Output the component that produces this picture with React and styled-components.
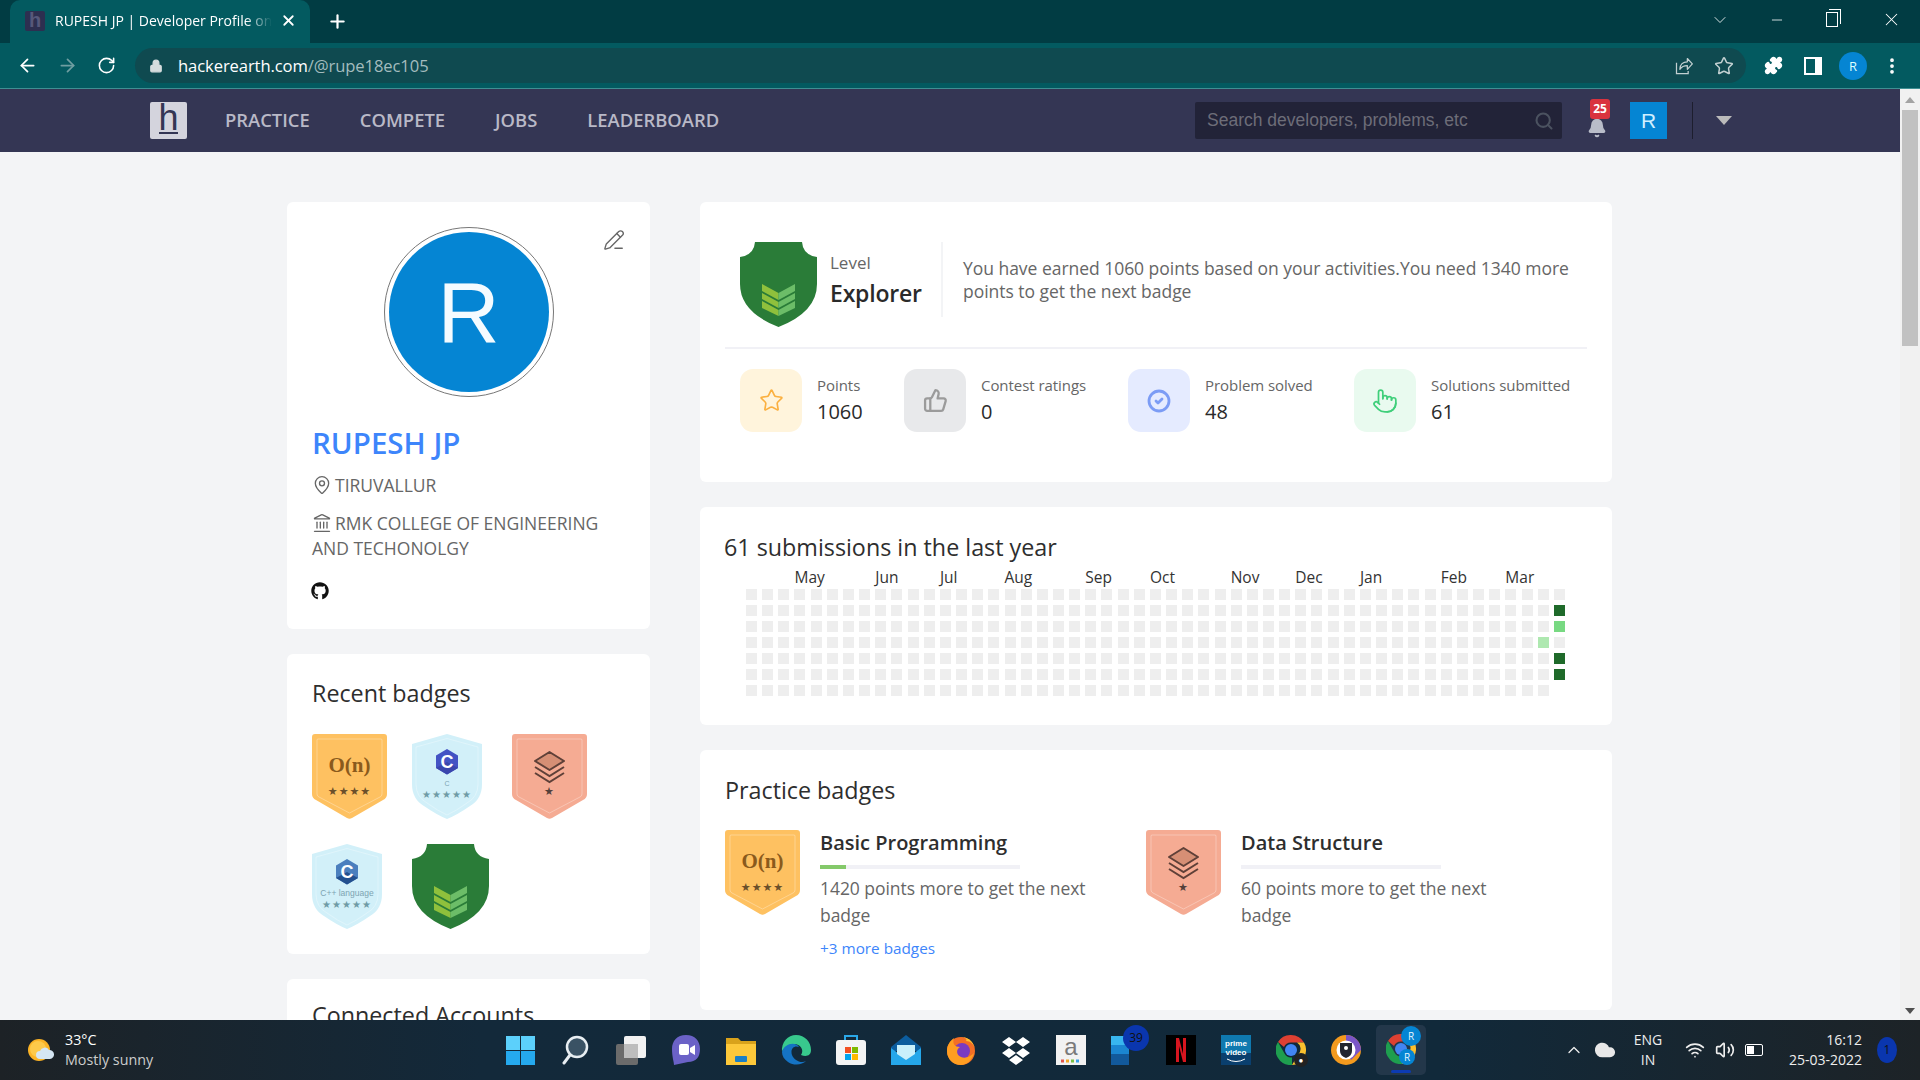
import React from "react";
import styled, { createGlobalStyle } from "styled-components";
import {
  ArrowLeft, ArrowRight, RotateCw, Lock, Star, Puzzle, X, Plus, ChevronDown, ChevronUp, Minus, Search, Bell,
  MapPin, Landmark, ThumbsUp, CircleCheck, Pointer, Wifi, Volume2, PencilLine, Cloud, EllipsisVertical,
} from "lucide-react";
import { FaGithub } from "react-icons/fa";

const Global = createGlobalStyle`
  html, body { margin: 0; padding: 0; height: 100%; overflow: hidden; }
  body { font-family: "Open Sans", "Noto Sans", sans-serif; background: #f3f4f6; }
  * { box-sizing: border-box; }
`;

const Screen = styled.div`width: 1920px; height: 1080px; display: flex; flex-direction: column; overflow: hidden;`;

/* ---- browser chrome ---- */
const TabStrip = styled.div`height: 43px; flex: none; background: #013c43; display: flex; align-items: flex-end; padding-left: 10px; color: #fff;`;
const Tab = styled.div`
  width: 300px; height: 43px; background: #035a60; border-radius: 10px 10px 0 0; display: flex; align-items: center;
  padding: 0 13px 2px 15px; font-family: "Open Sans", sans-serif; font-size: 14px;
`;
const Favicon = styled.div`
  width: 20px; height: 20px; background: #2d2f50; border-radius: 2px; flex: none; color: #56587a; font: 700 20px/19px "Liberation Sans", sans-serif; text-align: center; margin-right: 10px;
`;
const TabTitle = styled.div`
  flex: 1; white-space: nowrap; overflow: hidden; margin-right: 8px;
  -webkit-mask-image: linear-gradient(90deg, #000 88%, transparent 100%); mask-image: linear-gradient(90deg, #000 88%, transparent 100%);
`;
const NewTab = styled.div`margin-left: 17px; height: 43px; display: flex; align-items: center;`;
const WindowControls = styled.div`
  margin-left: auto; display: flex; height: 43px; align-items: center; gap: 39px; padding-right: 18px; padding-bottom: 4px;
`;
const Restore = styled.div`
  width: 12px; height: 15px; border: 1.4px solid #fff; position: relative; margin: 0 4px 0 2px;
  &::after { content: ""; position: absolute; left: 2px; top: -4px; width: 11px; height: 14px; border: 1.2px solid #fff; border-left: none; border-bottom: none; }
`;
const Toolbar = styled.div`
  height: 46px; flex: none; background: #035a60; border-bottom: 1px solid #3f8f93; display: flex; align-items: center; padding: 0 0 0 17px; gap: 20px; color: #fff;
`;
const ToolButtons = styled.div`display: flex; align-items: center; gap: 19px;`;
const AddressBar = styled.div`
  width: 1611px; height: 35px; background: #0f4a50; border-radius: 18px; display: flex; align-items: center; padding: 0 12px 0 14px; margin-left: -1px; gap: 15px;
`;
const Url = styled.div`flex: 1; font-size: 16.6px; color: #fff; letter-spacing: -0.1px; span { color: #a3bcbe; }`;
const AddressIcons = styled.div`display: flex; align-items: center; gap: 20px; color: #c2d0d1;`;
const ToolRight = styled.div`display: flex; align-items: center; gap: 17px; margin-left: -2px;`;
const PanelIcon = styled.div`width: 18px; height: 18px; background: #fff; padding: 2px 7px 2px 2px; margin-left: 4px; & > div { width: 100%; height: 100%; background: #035a60; }`;
const ProfileDot = styled.div`width: 28px; height: 28px; border-radius: 50%; background: #0585d3; color: #dff; font-size: 13px; text-align: center; line-height: 28px; margin-right: -2px;`;

/* ---- page frame ---- */
const Frame = styled.div`flex: 1; min-height: 0; display: flex;`;
const FrameContent = styled.div`flex: 1; min-width: 0; display: flex; flex-direction: column;`;
const Scrollbar = styled.div`width: 20px; flex: none; background: #f1f1f1; display: flex; flex-direction: column; align-items: center; padding-top: 8px;`;
const ScrollUp = styled.div`width: 0; height: 0; border-left: 5px solid transparent; border-right: 5px solid transparent; border-bottom: 6px solid #a3a3a3;`;
const ScrollThumb = styled.div`width: 16px; height: 236px; background: #c1c1c1; margin-top: 7px;`;
const ScrollDown = styled.div`width: 0; height: 0; border-left: 5px solid transparent; border-right: 5px solid transparent; border-top: 6px solid #505050; margin-top: auto; margin-bottom: 6px;`;

/* ---- site nav ---- */
const Nav = styled.nav`height: 63px; flex: none; background: #343654; display: flex; align-items: center; padding-left: 150px;`;
const Logo = styled.div`
  width: 37px; height: 37px; border-radius: 2px; background: #d4d4dd; color: #343654; text-align: center; font: 400 36px/31px "Liberation Sans", sans-serif; position: relative;
  &::after { content: ""; position: absolute; left: 9px; right: 9px; bottom: 5px; height: 2px; background: #343654; }
`;
const NavLinks = styled.div`display: flex; gap: 50px; margin-left: 38px; padding-bottom: 2px;`;
const NavLink = styled.a`color: #b9b9c7; font-size: 18.4px; font-weight: 600;`;
const NavSearch = styled.div`
  margin-left: auto; width: 367px; height: 37px; background: #222338; border-radius: 2px; display: flex; align-items: center; justify-content: space-between; padding: 0 8px 0 12px;
  color: #6d6d78; font: 400 17.5px "Liberation Sans", sans-serif;
`;
const BellWrap = styled.div`position: relative; width: 20px; height: 37px; margin-left: 25px; padding-bottom: 1px; color: #b9bdc9; display: flex; align-items: flex-end; justify-content: center;`;
const BellBadge = styled.div`
  position: absolute; left: 3px; top: -3px; width: 20px; height: 20px; background: #d9333f; border-radius: 3px; color: #fff; font-size: 12px; font-weight: 700; text-align: center; line-height: 19px;
`;
const UserBox = styled.div`
  width: 37px; height: 37px; background: #0585d3; color: #cfefff; font: 400 21px/37px "Liberation Sans", sans-serif; text-align: center; margin-left: 23px;
`;
const NavSep = styled.div`width: 1px; height: 37px; background: #1d1e2e; margin-left: 25px;`;
const Caret = styled.div`width: 0; height: 0; border-left: 8px solid transparent; border-right: 8px solid transparent; border-top: 9px solid #bbb; margin: 0 168px 0 23px;`;

/* ---- page ---- */
const Main = styled.main`flex: 1; min-height: 0; display: flex; gap: 50px; padding: 50px 0 0 287px; overflow: hidden;`;
const Column = styled.div`width: ${(p) => p.$w}px; flex: none; display: flex; flex-direction: column; gap: 25px;`;
const Card = styled.section`background: #fff; border-radius: 6px; height: ${(p) => p.$h}px; flex: none; position: relative; padding: ${(p) => p.$pad || "0"};`;

const EditBtn = styled.div`position: absolute; right: 25px; top: 27px; color: #666;`;
const Avatar = styled.div`
  width: 170px; height: 170px; border-radius: 50%; border: 1px solid #777; padding: 4px; margin: 0 auto;
  & > div { width: 100%; height: 100%; border-radius: 50%; background: #0585d3; color: #f4fbff; font: 400 86px/160px "Liberation Sans", sans-serif; text-align: center; }
`;
const Name = styled.h1`margin: 26px 0 0; font-size: 29.500px; line-height: 40px; font-weight: 600; color: #3d85fb;`;
const InfoLine = styled.div`font-size: 17.5px; line-height: 25px; color: #666; margin-top: ${(p) => p.$mt}px; svg { vertical-align: -3px; margin-right: 3px; }`;
const GitLink = styled.div`margin-top: 21px; height: 18px; color: #111; margin-left: -1px;`;
const CardTitle = styled.h2`font-size: 23.3px; line-height: 32px; font-weight: 500; color: #2e2e2e; margin: 0;`;
const BadgeGrid = styled.div`display: flex; flex-wrap: wrap; width: 300px; row-gap: 25px; margin-top: 25px;`;
const BadgeSlot = styled.div`width: 100px; height: 85px;`;

const LevelRow = styled.div`display: flex; align-items: flex-start; margin-left: 40px; height: 85px;`;
const LevelText = styled.div`margin-left: 13px; width: 111px; padding-top: 8px;`;
const LevelLabel = styled.div`font-size: 17px; line-height: 26px; color: #666;`;
const LevelName = styled.div`font-size: 23px; line-height: 35px; font-weight: 600; color: #2a2a2a; letter-spacing: -0.2px;`;
const LevelDesc = styled.p`margin: 0; width: 630px; border-left: 2px solid #f3f4f6; height: 75px; padding: 15px 0 0 20px; font-size: 17.5px; line-height: 23px; color: #666; letter-spacing: -0.03px;`;
const Divider = styled.div`height: 2px; background: #f1f1f6; margin: 20px 25px 0;`;
const StatRow = styled.div`display: flex; margin: 20px 0 0 40px;`;
const Stat = styled.div`display: flex; width: ${(p) => p.$w}px; flex: none;`;
const StatTile = styled.div`width: 62px; height: 63px; flex: none; border-radius: 13px; background: ${(p) => p.$bg}; color: ${(p) => p.$fg}; display: flex; align-items: center; justify-content: center;`;
const StatText = styled.div`margin-left: 15px; white-space: nowrap; padding-top: 5px;`;
const StatLabel = styled.div`font-size: 15px; line-height: 22px; color: #666; letter-spacing: -0.05px;`;
const StatValue = styled.div`font-size: 20px; line-height: 32px; font-weight: 500; color: #2a2a2a;`;

const Heat = styled.div`display: grid; grid-template-columns: repeat(51, 11px); column-gap: 5.16px; margin-left: 22px;`;
const Months = styled(Heat)`margin-top: 3px; height: 22.5px; align-items: center;`;
const Month = styled.span`grid-column: ${(p) => p.$col}; grid-row: 1; white-space: nowrap; font-size: 15.5px; color: #333; width: 11px;`;
const Cells = styled(Heat)`grid-template-rows: repeat(7, 11px); grid-auto-flow: column; row-gap: 5px;`;
const Cell = styled.div`width: 11px; height: 11px; background: ${(p) => p.$c};`;

const PracticeRow = styled.div`display: flex; margin-top: 24px;`;
const PracticeItem = styled.div`display: flex; width: 421px; flex: none;`;
const PracticeText = styled.div`margin-left: 20px; width: 285px;`;
const PracticeName = styled.div`font-size: 20px; line-height: 26px; font-weight: 600; color: #2e2e2e;`;
const Bar = styled.div`width: 200px; height: 4px; background: #f1f1f6; margin-top: 9px;`;
const BarFill = styled.div`height: 100%; background: #84c96a;`;
const PracticeDesc = styled.p`margin: 6px 0 0; font-size: 17.5px; line-height: 27px; color: #666; letter-spacing: -0.05px;`;
const MoreLink = styled.a`display: block; margin-top: 8px; font-size: 15.3px; line-height: 22px; color: #3d85fb;`;

/* ---- taskbar ---- */
const Taskbar = styled.footer`
  height: 60px; flex: none; display: flex; align-items: center; color: #fff; position: relative; z-index: 1;
  background: linear-gradient(90deg, #1d2226 0%, #13293a 25%, #11293a 75%, #1d2327 100%);
`;
const Weather = styled.div`width: 506px; flex: none; display: flex; align-items: center; padding-left: 27px;`;
const WeatherText = styled.div`margin-left: 11px; font-size: 14.3px; line-height: 20px; span { display: block; color: #ccc; }`;
const TaskIcons = styled.div`display: flex; align-items: center; gap: 25px; width: 921px; flex: none;`;
const TaskIcon = styled.div`width: 30px; height: 30px; flex: none; position: relative;`;
const ActiveTask = styled.div`
  width: 50px; height: 50px; border-radius: 5px; background: #23374a; margin: 0 -10px; position: relative; padding: 9px 10px; flex: none;
  &::after { content: ""; position: absolute; left: 15px; bottom: 2px; width: 20px; height: 3px; border-radius: 2px; background: #0c3bb3; }
`;
const CountDot = styled.div`position: absolute; right: -8px; top: -10px; width: 26px; height: 26px; border-radius: 50%; background: #0a36ae; color: #111; font-size: 12px; text-align: center; line-height: 26px;`;
const Tray = styled.div`display: flex; align-items: center; flex: 1; padding-left: 137px; color: #eee;`;
const CloudWrap = styled.div`margin-left: 10px; height: 22px;`;
const Lang = styled.div`width: 44px; margin-left: 10px; font-size: 14px; line-height: 20px; text-align: center; flex: none;`;
const TrayIcons = styled.div`display: flex; align-items: center; gap: 10px; margin-left: 15px;`;
const Battery = styled.div`width: 18px; height: 12px; border: 1.6px solid #fff; border-radius: 2px; padding: 1px; margin-left: 10px; & > div { width: 7px; height: 100%; background: #fff; }`;
const Clock = styled.div`width: 94px; margin-left: 5px; text-align: right; font-size: 14px; line-height: 20px; flex: none;`;
const Notice = styled.div`width: 20px; height: 26px; border-radius: 50%; background: #0a36ae; color: #111; font-size: 12px; line-height: 26px; text-align: center; margin-left: 15px; flex: none;`;

/* ---- drawings ---- */
const ShareIcon = () => (
  <svg width="20" height="20" viewBox="0 0 24 24" fill="none" stroke="currentColor" strokeWidth="1.500">
    <path d="M3 8v13h14v-3" />
    <path d="M7 16c0-6 4-9 9-9V3l6 6.500-6 6.500v-4.500c-4 0-7 1.500-9 4.500Z" strokeLinejoin="round" />
  </svg>
);
const Inner = ({ d }) => <path d={d} fill="none" stroke="#fff" strokeOpacity=".3" />;
const StarsText = ({ x, y, text, fill, size = 11 }) => (
  <text x={x} y={y} textAnchor="middle" fontSize={size} fill={fill} letterSpacing="1" fontFamily="DejaVu Sans, sans-serif">{text}</text>
);
const pennant = "M3 0H72Q75 0 75 3V60Q75 64 71 66L40 84Q37.5 85.5 35 84L4 66Q0 64 0 60V3Q0 0 3 0Z";
const pennantIn = "M6 5H69Q70 5 70 6V60Q70 62 68 63L37.5 79L7 63Q5 62 5 60V6Q5 5 6 5Z";
const OrangeBadge = () => (
  <svg width="75" height="85" viewBox="0 0 75 85">
    <path d={pennant} fill="#fec161" /><Inner d={pennantIn} />
    <text x="37.5" y="38" textAnchor="middle" fontFamily="Liberation Serif, serif" fontWeight="700" fontSize="21" fill="#8a5a1c">O(n)</text>
    <StarsText x="37.5" y="61" text="★★★★" fill="#6b4f2a" />
  </svg>
);
const SalmonBadge = () => (
  <svg width="75" height="85" viewBox="0 0 75 85">
    <path d={pennant} fill="#f5ab93" /><Inner d={pennantIn} />
    <path d="M37.5 18L52 27L37.5 36L23 27Z" fill="#d68f75" stroke="#5f4038" strokeWidth="2" strokeLinejoin="round" />
    <path d="M23 33L37.5 42L52 33M23 39L37.5 48L52 39" fill="none" stroke="#5f4038" strokeWidth="2" />
    <StarsText x="37.5" y="61" text="★" fill="#54403a" />
  </svg>
);
const Hex = ({ fill, dark, label }) => (
  <g>
    <path d="M35 15L46 21.500V34L35 40.500L24 34V21.500Z" fill={fill} />
    <path d="M24 34L35 40.500L46 34L35 28Z" fill={dark} />
    <text x="35" y="34" textAnchor="middle" fontFamily="Liberation Sans, sans-serif" fontWeight="700" fontSize="18" fill="#fff">{label}</text>
  </g>
);
const blue = "M0 10L35 0L70 10V50Q70 65 58 72Q45 81 35 85Q25 81 12 72Q0 65 0 50Z";
const blueIn = "M4 13L35 4.500L66 13V50Q66 63 55 69Q44 77 35 81Q26 77 15 69Q4 63 4 50Z";
const CBadge = () => (
  <svg width="70" height="85" viewBox="0 0 70 85">
    <path d={blue} fill="#d2f0f9" /><Inner d={blueIn} />
    <Hex fill="#4353c4" dark="#3a46ad" label="C" />
    <text x="35" y="52" textAnchor="middle" fontFamily="Liberation Sans, sans-serif" fontSize="7" fill="#7da4b2">C</text>
    <StarsText x="35" y="64" text="★★★★★" fill="#6f9ba6" size={10} />
  </svg>
);
const CppBadge = () => (
  <svg width="70" height="85" viewBox="0 0 70 85">
    <path d={blue} fill="#d2f0f9" /><Inner d={blueIn} />
    <Hex fill="#4b7fbe" dark="#23508f" label="C" />
    <text x="35" y="52" textAnchor="middle" fontFamily="Liberation Sans, sans-serif" fontSize="8.500" fill="#7da4b2">C++ language</text>
    <StarsText x="35" y="64" text="★★★★★" fill="#6f9ba6" size={10} />
  </svg>
);
const GreenShield = () => (
  <svg width="77" height="85" viewBox="0 0 77 85">
    <path d="M15 0H62Q63 13 77 15V42Q77 70 38.500 85Q0 70 0 42V15Q14 13 15 0Z" fill="#2a7c38" />
    <path d="M22 42L38.500 51V58L22 49ZM22 51L38.500 60V66L22 57ZM22 59L38.500 68V74L22 66Z" fill="#8fc03c" />
    <path d="M55 42L38.500 51V58L55 49ZM55 51L38.500 60V66L55 57ZM55 59L38.500 68V74L55 66Z" fill="#6cbd68" />
  </svg>
);
const Svg30 = ({ children }) => <svg width="30" height="30" viewBox="0 0 30 30">{children}</svg>;
const WeatherIcon = () => (
  <svg width="27" height="26" viewBox="0 0 27 26">
    <circle cx="12" cy="13" r="11" fill="#fbb325" /><circle cx="11" cy="12" r="8" fill="#fdc94a" />
    <path d="M13 22a4 4 0 0 1 0-8 5 5 0 0 1 9-1 4.500 4.500 0 0 1 1 9Z" fill="#d5e6f3" />
  </svg>
);
const icons = {
  win: <Svg30><path d="M0 1h14v14H0zM15 1h14v14H15z" fill="#5cd0fb" /><path d="M0 16h14v14H0zM15 16h14v14H15z" fill="#25a9ee" /></Svg30>,
  search: <Svg30><circle cx="16" cy="12" r="10" fill="#3a5264" stroke="#e8eef2" strokeWidth="2.500" /><path d="M9 20L3 28" stroke="#e8eef2" strokeWidth="3" strokeLinecap="round" /></Svg30>,
  view: <Svg30><rect x="8" y="1" width="22" height="22" rx="2" fill="#f2f2f2" /><rect x="0" y="9" width="22" height="21" rx="2" fill="#6b6b6b" /><rect x="8" y="9" width="14" height="14" fill="#bdbdbd" /></Svg30>,
  chat: <Svg30><path d="M15 0C24 0 29 6 29 14S25 27 17 27L3 30C3 27 1 22 1 14S6 0 15 0Z" fill="#6b62c7" /><rect x="8" y="9" width="10" height="11" rx="2" fill="#fff" /><path d="M19 13l5-3v10l-5-3Z" fill="#fff" /></Svg30>,
  folder: <Svg30><path d="M0 3h12l3 3h15v24H0Z" fill="#d9a21b" /><path d="M0 9h30v21H0Z" fill="#fdc83a" /><rect x="9" y="21" width="12" height="6" rx="1" fill="#1a7fc6" /></Svg30>,
  edge: <Svg30><path d="M15 0C24 0 30 7 30 15C30 21 25 22 20 20C24 14 18 8 12 9C6 10 2 14 1 17C0 7 7 0 15 0Z" fill="#38c98d" /><path d="M1 17C3 9 14 6 18 12C13 10 9 14 11 20C13 25 20 29 25 26C21 30 13 31 7 27C3 24 1 21 1 17Z" fill="#1573c4" /></Svg30>,
  store: <Svg30><path d="M9 5V1h12v4" fill="none" stroke="#2aa8e8" strokeWidth="2" /><rect x="0" y="5" width="30" height="25" rx="3" fill="#f4f4f4" /><path d="M9 12h6v6H9z" fill="#f25022" /><path d="M16 12h6v6h-6z" fill="#7fba00" /><path d="M9 19h6v6H9z" fill="#00a4ef" /><path d="M16 19h6v6h-6z" fill="#ffb900" /></Svg30>,
  mail: <Svg30><path d="M15 0L30 12V16H0V12Z" fill="#0c5d9e" /><path d="M0 13L15 24L30 13V30H0Z" fill="#25a7ea" /><path d="M6 10h18v9l-9 6-9-6Z" fill="#c9f0fb" /></Svg30>,
  firefox: <Svg30><circle cx="15" cy="16" r="14" fill="#f36e25" /><path d="M15 2C24 2 29 9 29 16C29 9 24 6 20 6C22 4 18 2 15 2Z" fill="#fec32f" /><circle cx="16" cy="16" r="8" fill="#7a3bc2" /><path d="M1 16C1 10 4 6 8 3C6 9 9 12 14 12C10 14 10 20 15 22C20 24 25 21 28 18C26 25 21 30 15 30C7 30 1 24 1 16Z" fill="#ff9e21" /></Svg30>,
  dropbox: <Svg30><path d="M8 2L15 7L8 12L1 7ZM22 2L29 7L22 12L15 7ZM8 13L15 18L8 23L1 18ZM22 13L29 18L22 23L15 18ZM15 20L22 25L15 30L8 25Z" fill="#fff" /></Svg30>,
  amazon: <Svg30><rect width="30" height="30" fill="#f2f2f2" /><text x="15" y="20" textAnchor="middle" fontFamily="Liberation Sans, sans-serif" fontSize="24" fill="#7a7a7a">a</text><path d="M5 26h3" stroke="#e2574c" strokeWidth="3" /><path d="M10 26h3" stroke="#f5a623" strokeWidth="3" /><path d="M15 26h3" stroke="#7ac143" strokeWidth="3" /><path d="M20 26h3" stroke="#3aa0e8" strokeWidth="3" /></Svg30>,
  todo: <Svg30><path d="M0 1h18v9H0z" fill="#38b6ef" /><path d="M0 10h18v9H0z" fill="#1b86d1" /><path d="M0 19h18v11H0z" fill="#12599b" /></Svg30>,
  netflix: <Svg30><rect width="30" height="30" fill="#000" /><path d="M10 3h3l4 16V3h3v24h-3L13 11v16h-3Z" fill="#d8151f" /></Svg30>,
  prime: <Svg30><rect width="30" height="30" fill="#0f79af" /><rect y="18" width="30" height="12" fill="#0a3f6e" /><text x="15" y="11" textAnchor="middle" fontFamily="Liberation Sans, sans-serif" fontSize="8" fontWeight="700" fill="#fff">prime</text><text x="15" y="20" textAnchor="middle" fontFamily="Liberation Sans, sans-serif" fontSize="8" fontWeight="700" fill="#fff">video</text><path d="M6 24Q15 29 24 24" fill="none" stroke="#fff" /></Svg30>,
  brave: <Svg30><circle cx="15" cy="15" r="15" fill="#f39a1e" /><path d="M15 0A15 15 0 0 1 30 15L20 25L15 15Z" fill="#7a55c7" /><circle cx="15" cy="15" r="9.500" fill="#fff" /><path d="M9 8h12v8q0 5-6 7-6-2-6-7Z" fill="#22252f" /><circle cx="15" cy="13" r="2" fill="#fff" /></Svg30>,
};
const Chrome = () => (
  <Svg30>
    <path d="M15 0a15 15 0 0 1 13 7.500H15a7.500 7.500 0 0 0-7 4.500L2 7A15 15 0 0 1 15 0Z" fill="#de4032" />
    <path d="M28 7.500A15 15 0 0 1 16 30l6.500-11A7.500 7.500 0 0 0 21 7.500Z" fill="#fbc02d" />
    <path d="M2 7l6.500 11.500A7.500 7.500 0 0 0 16 22.500L16 30A15 15 0 0 1 2 7Z" fill="#1e9e4f" />
    <circle cx="15" cy="15" r="6" fill="#4285f4" />
  </Svg30>
);
const MiniR = styled.div`
  position: absolute; border-radius: 50%; background: #0585d3; color: #e6f6ff; text-align: center; font-family: "Open Sans", sans-serif;
  width: ${(p) => p.$s}px; height: ${(p) => p.$s}px; line-height: ${(p) => p.$s}px; font-size: 10px; left: ${(p) => p.$l}px; top: ${(p) => p.$t}px;
`;
const AvatarBadge = styled.div`position: absolute; right: -2px; bottom: -2px; width: 14px; height: 14px; border-radius: 50%; background: #222; color: #fff; font-size: 8px; line-height: 14px; text-align: center;`;

const active = { 1: "#1f6a2a", 2: "#78d982", 4: "#1f6a2a", 5: "#1f6a2a" };
const months = [["May", 4], ["Jun", 9], ["Jul", 13], ["Aug", 17], ["Sep", 22], ["Oct", 26], ["Nov", 31], ["Dec", 35], ["Jan", 39], ["Feb", 44], ["Mar", 48]];
const cells = [];
for (let c = 0; c < 51; c++) {
  const n = c === 50 ? 6 : 7;
  for (let r = 0; r < n; r++) {
    let col = "#eeeeee";
    if (c === 50 && active[r]) col = active[r];
    if (c === 49 && r === 3) col = "#aee8b0";
    cells.push(<Cell key={`${c}-${r}`} $c={col} />);
  }
}

export default function App() {
  return (
    <Screen>
      <Global />
      <TabStrip>
        <Tab>
          <Favicon>h</Favicon>
          <TabTitle>RUPESH JP | Developer Profile on</TabTitle>
          <X size={17} strokeWidth={2.500} />
        </Tab>
        <NewTab><Plus size={21} strokeWidth={2.500} /></NewTab>
        <WindowControls>
          <ChevronDown size={20} strokeWidth={1} />
          <Minus size={16} strokeWidth={1.200} />
          <Restore />
          <X size={21} strokeWidth={1.200} />
        </WindowControls>
      </TabStrip>
      <Toolbar>
        <ToolButtons>
          <ArrowLeft size={21} />
          <ArrowRight size={21} color="#6f9ea1" />
          <RotateCw size={19} />
        </ToolButtons>
        <AddressBar>
          <Lock size={14} color="#d5dcdd" fill="#d5dcdd" />
          <Url>hackerearth.com<span>/@rupe18ec105</span></Url>
          <AddressIcons>
            <ShareIcon />
            <Star size={20} strokeWidth={1.800} />
          </AddressIcons>
        </AddressBar>
        <ToolRight>
          <Puzzle size={19} fill="#fff" />
          <PanelIcon><div /></PanelIcon>
          <ProfileDot>R</ProfileDot>
          <EllipsisVertical size={20} strokeWidth={2.500} />
        </ToolRight>
      </Toolbar>
      <Frame>
        <FrameContent>
          <Nav>
            <Logo>h</Logo>
            <NavLinks>
              <NavLink>PRACTICE</NavLink>
              <NavLink>COMPETE</NavLink>
              <NavLink>JOBS</NavLink>
              <NavLink>LEADERBOARD</NavLink>
            </NavLinks>
            <NavSearch>Search developers, problems, etc<Search size={20} color="#4b5260" strokeWidth={2.500} /></NavSearch>
            <BellWrap>
              <Bell size={20} fill="#b9bdc9" />
              <BellBadge>25</BellBadge>
            </BellWrap>
            <UserBox>R</UserBox>
            <NavSep />
            <Caret />
          </Nav>
          <Main>
            <Column $w={363}>
              <Card $h={427} $pad="25px 25px 0">
                <EditBtn><PencilLine size={22} strokeWidth={1.500} /></EditBtn>
                <Avatar><div>R</div></Avatar>
                <Name>RUPESH JP</Name>
                <InfoLine $mt={10}><MapPin size={20} strokeWidth={1.600} />TIRUVALLUR</InfoLine>
                <InfoLine $mt={13}><Landmark size={20} strokeWidth={1.600} />RMK COLLEGE OF ENGINEERING AND TECHONOLGY</InfoLine>
                <GitLink><FaGithub size={18} /></GitLink>
              </Card>
              <Card $h={300} $pad="23px 25px 0">
                <CardTitle>Recent badges</CardTitle>
                <BadgeGrid>
                  <BadgeSlot><OrangeBadge /></BadgeSlot>
                  <BadgeSlot><CBadge /></BadgeSlot>
                  <BadgeSlot><SalmonBadge /></BadgeSlot>
                  <BadgeSlot><CppBadge /></BadgeSlot>
                  <BadgeSlot><GreenShield /></BadgeSlot>
                </BadgeGrid>
              </Card>
              <Card $h={300} $pad="20px 25px 0">
                <CardTitle>Connected Accounts</CardTitle>
              </Card>
            </Column>
            <Column $w={912}>
              <Card $h={280} $pad="40px 0 0">
                <LevelRow>
                  <GreenShield />
                  <LevelText>
                    <LevelLabel>Level</LevelLabel>
                    <LevelName>Explorer</LevelName>
                  </LevelText>
                  <LevelDesc>You have earned 1060 points based on your activities.You need 1340 more points to get the next badge</LevelDesc>
                </LevelRow>
                <Divider />
                <StatRow>
                  <Stat $w={164}>
                    <StatTile $bg="#fff4dc" $fg="#fbb040"><Star size={25} strokeWidth={1.600} /></StatTile>
                    <StatText><StatLabel>Points</StatLabel><StatValue>1060</StatValue></StatText>
                  </Stat>
                  <Stat $w={224}>
                    <StatTile $bg="#e8e9eb" $fg="#9b9b9b"><ThumbsUp size={25} strokeWidth={2.200} /></StatTile>
                    <StatText><StatLabel>Contest ratings</StatLabel><StatValue>0</StatValue></StatText>
                  </Stat>
                  <Stat $w={226}>
                    <StatTile $bg="#e5ebff" $fg="#7c9cf5"><CircleCheck size={24} strokeWidth={2.800} /></StatTile>
                    <StatText><StatLabel>Problem solved</StatLabel><StatValue>48</StatValue></StatText>
                  </Stat>
                  <Stat $w={230}>
                    <StatTile $bg="#e9faef" $fg="#3fcf7a"><Pointer size={26} strokeWidth={1.600} /></StatTile>
                    <StatText><StatLabel>Solutions submitted</StatLabel><StatValue>61</StatValue></StatText>
                  </Stat>
                </StatRow>
              </Card>
              <Card $h={218} $pad="24px 0 0 24px">
                <CardTitle>61 submissions in the last year</CardTitle>
                <Months>{months.map(([m, c]) => <Month key={m} $col={c}>{m}</Month>)}</Months>
                <Cells>{cells}</Cells>
              </Card>
              <Card $h={260} $pad="24px 0 0 25px">
                <CardTitle>Practice badges</CardTitle>
                <PracticeRow>
                  <PracticeItem>
                    <OrangeBadge />
                    <PracticeText>
                      <PracticeName>Basic Programming</PracticeName>
                      <Bar><BarFill style={{ width: "13%" }} /></Bar>
                      <PracticeDesc>1420 points more to get the next badge</PracticeDesc>
                      <MoreLink>+3 more badges</MoreLink>
                    </PracticeText>
                  </PracticeItem>
                  <PracticeItem>
                    <SalmonBadge />
                    <PracticeText>
                      <PracticeName>Data Structure</PracticeName>
                      <Bar />
                      <PracticeDesc>60 points more to get the next badge</PracticeDesc>
                    </PracticeText>
                  </PracticeItem>
                </PracticeRow>
              </Card>
            </Column>
          </Main>
        </FrameContent>
        <Scrollbar>
          <ScrollUp />
          <ScrollThumb />
          <ScrollDown />
        </Scrollbar>
      </Frame>
      <Taskbar>
        <Weather>
          <WeatherIcon />
          <WeatherText>33°C<span>Mostly sunny</span></WeatherText>
        </Weather>
        <TaskIcons>
          <TaskIcon>{icons.win}</TaskIcon>
          <TaskIcon>{icons.search}</TaskIcon>
          <TaskIcon>{icons.view}</TaskIcon>
          <TaskIcon>{icons.chat}</TaskIcon>
          <TaskIcon>{icons.folder}</TaskIcon>
          <TaskIcon>{icons.edge}</TaskIcon>
          <TaskIcon>{icons.store}</TaskIcon>
          <TaskIcon>{icons.mail}</TaskIcon>
          <TaskIcon>{icons.firefox}</TaskIcon>
          <TaskIcon>{icons.dropbox}</TaskIcon>
          <TaskIcon>{icons.amazon}</TaskIcon>
          <TaskIcon>{icons.todo}<CountDot>39</CountDot></TaskIcon>
          <TaskIcon>{icons.netflix}</TaskIcon>
          <TaskIcon>{icons.prime}</TaskIcon>
          <TaskIcon><Chrome /><AvatarBadge>●</AvatarBadge></TaskIcon>
          <TaskIcon>{icons.brave}</TaskIcon>
          <ActiveTask>
            <TaskIcon>
              <Chrome />
              <MiniR $s={20} $l={15} $t={-8}>R</MiniR>
              <MiniR $s={16} $l={13} $t={15}>R</MiniR>
            </TaskIcon>
          </ActiveTask>
        </TaskIcons>
        <Tray>
          <ChevronUp size={20} strokeWidth={1.500} />
          <CloudWrap><Cloud size={22} fill="#e8e8e8" color="#e8e8e8" /></CloudWrap>
          <Lang>ENG<br />IN</Lang>
          <TrayIcons>
            <Wifi size={20} />
            <Volume2 size={20} />
          </TrayIcons>
          <Battery><div /></Battery>
          <Clock>16:12<br />25-03-2022</Clock>
          <Notice>1</Notice>
        </Tray>
      </Taskbar>
    </Screen>
  );
}
